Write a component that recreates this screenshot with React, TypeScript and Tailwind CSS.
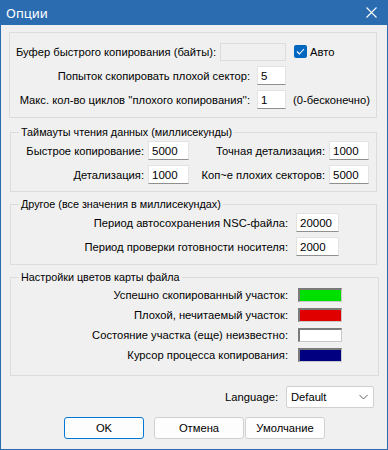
import React from "react";

const Edit = ({ w, value, h = "h-[19px]" }: { w: string; value: string; h?: string }) => (
  <div
    className={`${w} ${h} shrink-0 bg-white border border-[#e3e3e3] border-b-[#8f8f8f] flex items-center pl-[3px] text-[11.5px] text-black`}
  >
    {value}
  </div>
);

const Swatch = ({ color }: { color: string }) => (
  <div className={`w-[44px] h-[14px] shrink-0 border-t-2 border-l-2 border-b border-r border-t-[#7a7a7a] border-l-[#7a7a7a] border-b-[#c8c8c8] border-r-[#c8c8c8] ${color}`} />
);

const Group = ({
  caption,
  className,
  children,
}: {
  caption?: string;
  className: string;
  children: React.ReactNode;
}) => (
  <div className={`relative border border-[#dcdcdc] ${className}`}>
    {caption && (
      <span className="absolute -top-[8px] left-[8px] px-[2px] bg-[#f0f0f0] text-[10.8px] leading-[14px] whitespace-nowrap">
        {caption}
      </span>
    )}
    {children}
  </div>
);

export default function App() {
  return (
    <div className="w-[388px] h-[450px] flex flex-col bg-[#2b6cb0] font-['Liberation_Sans',Arial,sans-serif] text-[11.2px] leading-[14px] text-black whitespace-nowrap">
      {/* Title bar */}
      <div className="h-[25px] shrink-0 flex items-center justify-between pl-[6px] pr-[11px] text-white">
        <span className="text-[13px] leading-[16px] font-['Noto_Sans',sans-serif]">Опции</span>
        <svg width="11" height="11" viewBox="0 0 11 11">
          <path d="M0.5 0.5 L10.5 10.5 M10.5 0.5 L0.5 10.5" stroke="white" strokeWidth="1.1" />
        </svg>
      </div>

      {/* Body */}
      <div className="flex-1 mx-[1px] mb-[1px] bg-[#f0f0f0] flex flex-col">
        {/* Group 1 */}
        <Group className="mt-[7px] ml-[8px] mr-[10px] h-[86px] pt-[9px] flex flex-col gap-[5px]">
          <div className="h-[19px] flex items-center">
            <div className="w-[210px] pl-[6px]">Буфер быстрого копирования (байты):</div>
            <div className="w-[66px] h-[18px] border border-[#dcdcdc] bg-[#f0f0f0]" />
            <div className="ml-[8px] w-[13px] h-[13px] rounded-[2px] bg-[#0067c0] flex items-center justify-center">
              <svg width="9" height="7" viewBox="0 0 9 7">
                <path d="M1 3.5 L3.4 6 L8 1" stroke="white" strokeWidth="1.1" fill="none" />
              </svg>
            </div>
            <span className="ml-[3px]">Авто</span>
          </div>
          <div className="h-[19px] flex items-center">
            <div className="w-[240px] text-right">Попыток скопировать плохой сектор:</div>
            <div className="ml-[7px]">
              <Edit w="w-[29px]" value="5" />
            </div>
          </div>
          <div className="h-[19px] flex items-center">
            <div className="w-[240px] text-right">Макс. кол-во циклов ''плохого копирования'':</div>
            <div className="ml-[7px]">
              <Edit w="w-[29px]" value="1" />
            </div>
            <span className="ml-[7px]">(0-бесконечно)</span>
          </div>
        </Group>

        {/* Group 2 */}
        <Group
          caption="Таймауты чтения данных (миллисекунды)"
          className="mt-[14px] ml-[9px] mr-[10px] h-[60px] pt-[8px] flex flex-col gap-[5px]"
        >
          <div className="h-[19px] flex items-center">
            <div className="w-[133px] text-right">Быстрое копирование:</div>
            <div className="ml-[4px]">
              <Edit w="w-[41px]" value="5000" />
            </div>
            <div className="w-[136px] text-right">Точная детализация:</div>
            <div className="ml-[4px]">
              <Edit w="w-[40px]" value="1000" />
            </div>
          </div>
          <div className="h-[19px] flex items-center">
            <div className="w-[133px] text-right">Детализация:</div>
            <div className="ml-[4px]">
              <Edit w="w-[41px]" value="1000" />
            </div>
            <div className="w-[136px] text-right">Коп~е плохих секторов:</div>
            <div className="ml-[4px]">
              <Edit w="w-[40px]" value="5000" />
            </div>
          </div>
        </Group>

        {/* Group 3 */}
        <Group
          caption="Другое (все значения в миллисекундах)"
          className="mt-[12px] ml-[9px] mr-[10px] h-[61px] pt-[8px] flex flex-col gap-[5px]"
        >
          <div className="h-[19px] flex items-center">
            <div className="w-[277px] text-right">Период автосохранения NSC-файла:</div>
            <div className="ml-[8px]">
              <Edit w="w-[43px]" value="20000" />
            </div>
          </div>
          <div className="h-[19px] flex items-center">
            <div className="w-[277px] text-right">Период проверки готовности носителя:</div>
            <div className="ml-[8px]">
              <Edit w="w-[43px]" value="2000" />
            </div>
          </div>
        </Group>

        {/* Group 4 */}
        <Group
          caption="Настройки цветов карты файла"
          className="mt-[12px] ml-[9px] mr-[8px] h-[99px] pt-[7px] flex flex-col"
        >
          {[
            ["Успешно скопированный участок:", "bg-[#00e000]"],
            ["Плохой, нечитаемый участок:", "bg-[#e00000]"],
            ["Состояние участка (еще) неизвестно:", "bg-white"],
            ["Курсор процесса копирования:", "bg-[#000080]"],
          ].map(([label, color]) => (
            <div key={label} className="h-[20px] flex items-center">
              <div className="w-[277px] text-right">{label}</div>
              <div className="ml-[10px]">
                <Swatch color={color} />
              </div>
            </div>
          ))}
        </Group>

        {/* Language */}
        <div className="mt-[10px] flex items-center justify-end pr-[13px]">
          <span>Language:</span>
          <div className="ml-[8px] w-[88px] h-[22px] bg-white border border-[#d0d0d0] rounded-[2px] flex items-center justify-between pl-[4px] pr-[5px]">
            <span>Default</span>
            <svg width="9" height="6" viewBox="0 0 9 6">
              <path d="M0.5 1 L4.5 5 L8.5 1" stroke="#606060" strokeWidth="1" fill="none" />
            </svg>
          </div>
        </div>

        {/* Buttons */}
        <div className="mt-[9px] flex items-center pl-[63px]">
          <div className="w-[80px] h-[22px] rounded-[3px] border border-[#0078d7] bg-[#fdfdfd] flex items-center justify-center">
            OK
          </div>
          <div className="ml-[10px] w-[90px] h-[22px] rounded-[3px] border border-[#d0d0d0] bg-[#fdfdfd] flex items-center justify-center">
            Отмена
          </div>
          <div className="ml-[1px] w-[80px] h-[22px] rounded-[3px] border border-[#d0d0d0] bg-[#fdfdfd] flex items-center justify-center">
            Умолчание
          </div>
        </div>
      </div>
    </div>
  );
}
